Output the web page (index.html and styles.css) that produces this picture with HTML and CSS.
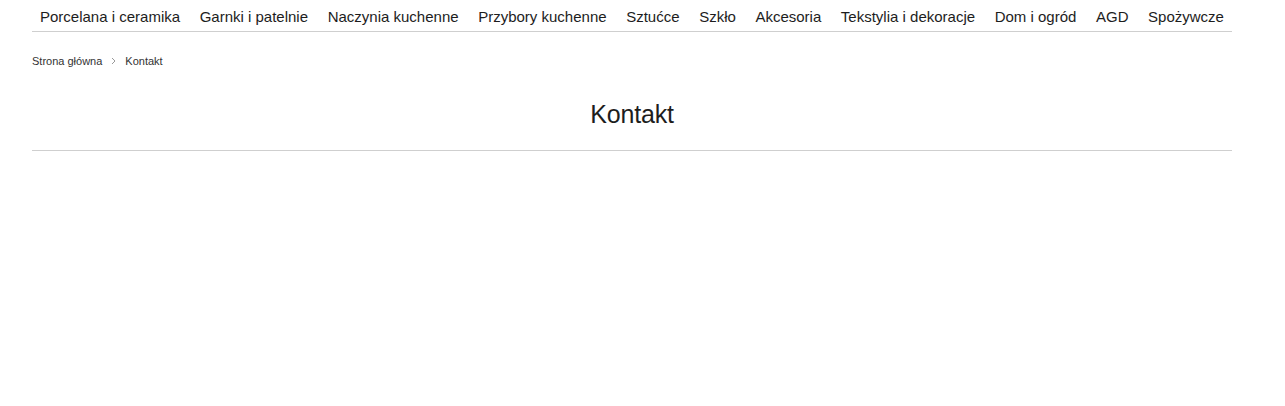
FILE: index.html
```html
<!DOCTYPE html>
<html lang="pl">
<head>
<meta charset="utf-8">
<link rel="stylesheet" href="styles.css">
</head>
<body>
<div class="page">
  <nav class="menu">
    <a href="#">Porcelana i ceramika</a>
    <a href="#">Garnki i patelnie</a>
    <a href="#">Naczynia kuchenne</a>
    <a href="#">Przybory kuchenne</a>
    <a href="#">Sztućce</a>
    <a href="#">Szkło</a>
    <a href="#">Akcesoria</a>
    <a href="#">Tekstylia i dekoracje</a>
    <a href="#">Dom i ogród</a>
    <a href="#">AGD</a>
    <a href="#">Spożywcze</a>
  </nav>
  <div class="crumbs">
    <a href="#">Strona główna</a>
    <svg class="sep" width="5" height="8" viewBox="0 0 5 8"><path d="M1 1 L4 4 L1 7" fill="none" stroke="#9a9a9a" stroke-width="1"/></svg>
    <span>Kontakt</span>
  </div>
  <h1 class="title">Kontakt</h1>
</div>
</body>
</html>
```
FILE: styles.css
```css
html, body { margin: 0; padding: 0; background: #fff; }
body { font-family: "Liberation Sans", Arial, sans-serif; color: #222; }
.page { width: 1200px; margin: 0 0 0 32px; }
.menu {
  display: flex;
  height: 31px;
  border-bottom: 1px solid #cfcfcf;
  align-items: center;
  padding-left: 8px;
  gap: 19.6px;
}
.menu a {
  font-size: 15px;
  color: #1d1d1d;
  text-decoration: none;
  line-height: 31px;
  margin-top: 1px;
}
.crumbs {
  display: flex;
  align-items: center;
  gap: 9px;
  height: 58px;
  font-size: 11px;
  color: #333;
}
.crumbs a { color: #333; text-decoration: none; }
.crumbs .sep { display: block; }
.title {
  margin: 0;
  text-align: center;
  font-weight: normal;
  font-size: 25px;
  color: #1d1d1d;
  letter-spacing: -0.2px;
  padding: 9px 0 21px;
  border-bottom: 1px solid #cfcfcf;
  line-height: 30px;
}
```
